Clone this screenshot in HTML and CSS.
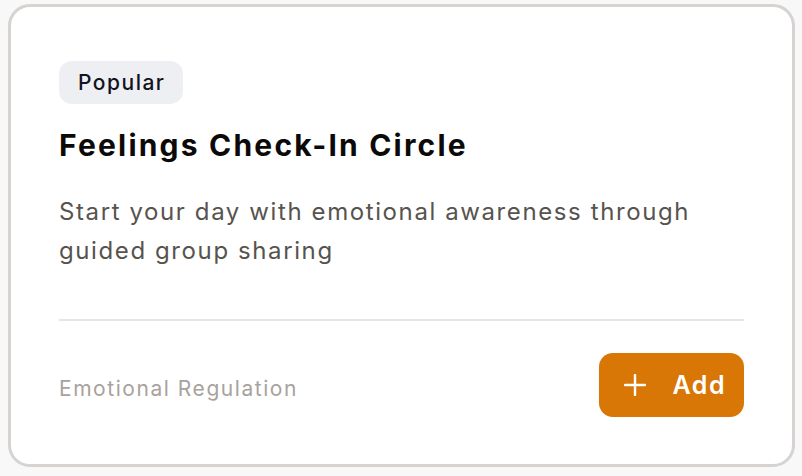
FILE: index.html
```html
<!DOCTYPE html>
<html lang="en">
<head>
<meta charset="utf-8">
<title>Feelings Check-In Circle</title>
<link rel="stylesheet" href="styles.css">
</head>
<body>
<div class="card">
  <span class="badge">Popular</span>
  <h2 class="title">Feelings Check-In Circle</h2>
  <p class="desc">Start your day with emotional awareness through guided group sharing</p>
  <div class="divider"></div>
  <div class="footer">
    <span class="category">Emotional Regulation</span>
    <button class="add-btn" type="button">
      <svg class="plus" width="22" height="22" viewBox="0 0 22 22" aria-hidden="true">
        <path d="M11 1v20M1 11h20" stroke="#fff" stroke-width="2.4" stroke-linecap="round" fill="none"/>
      </svg>
      <span>Add</span>
    </button>
  </div>
</div>
</body>
</html>
```
FILE: styles.css
```css
* { box-sizing: border-box; }
html, body { margin: 0; }
body {
  background: #f8f8f8;
  padding: 4px 7px 9px 8px;
  font-family: Inter, "Noto Sans", sans-serif;
}
.card {
  background: #fff;
  border: 3px solid #d6d3d1;
  border-radius: 22px;
  padding: 54px 48px 47px 48px;
  display: flex;
  flex-direction: column;
  align-items: flex-start;
}
.badge {
  display: inline-flex;
  align-items: center;
  height: 43px;
  padding: 0 18px 0 19px;
  background: #eeeff3;
  border-radius: 13px;
  font-size: 21px;
  font-weight: 500;
  letter-spacing: 1.5px;
  color: #111322;
}
.title {
  margin: 24px 0 0;
  font-size: 30px;
  line-height: 34px;
  font-weight: 700;
  letter-spacing: 2.2px;
  color: #0c0a09;
}
.desc {
  margin: 30px 0 0;
  font-size: 24px;
  line-height: 39px;
  letter-spacing: 1.6px;
  color: #57534e;
}
.divider {
  align-self: stretch;
  height: 2px;
  background: #e7e5e4;
  margin-top: 49px;
}
.footer {
  align-self: stretch;
  margin-top: 32px;
  display: flex;
  align-items: center;
  justify-content: space-between;
}
.category {
  font-size: 21px;
  letter-spacing: 1.55px;
  color: #a8a29e;
  margin-top: 6px;
}
.add-btn {
  display: flex;
  align-items: center;
  gap: 26px;
  height: 64px;
  padding: 0 18px 0 25px;
  background: #d97706;
  border: none;
  border-radius: 14px;
  color: #fff;
  font-family: inherit;
  font-size: 25px;
  font-weight: 600;
  letter-spacing: 1.5px;
}
.plus { display: block; }
```
